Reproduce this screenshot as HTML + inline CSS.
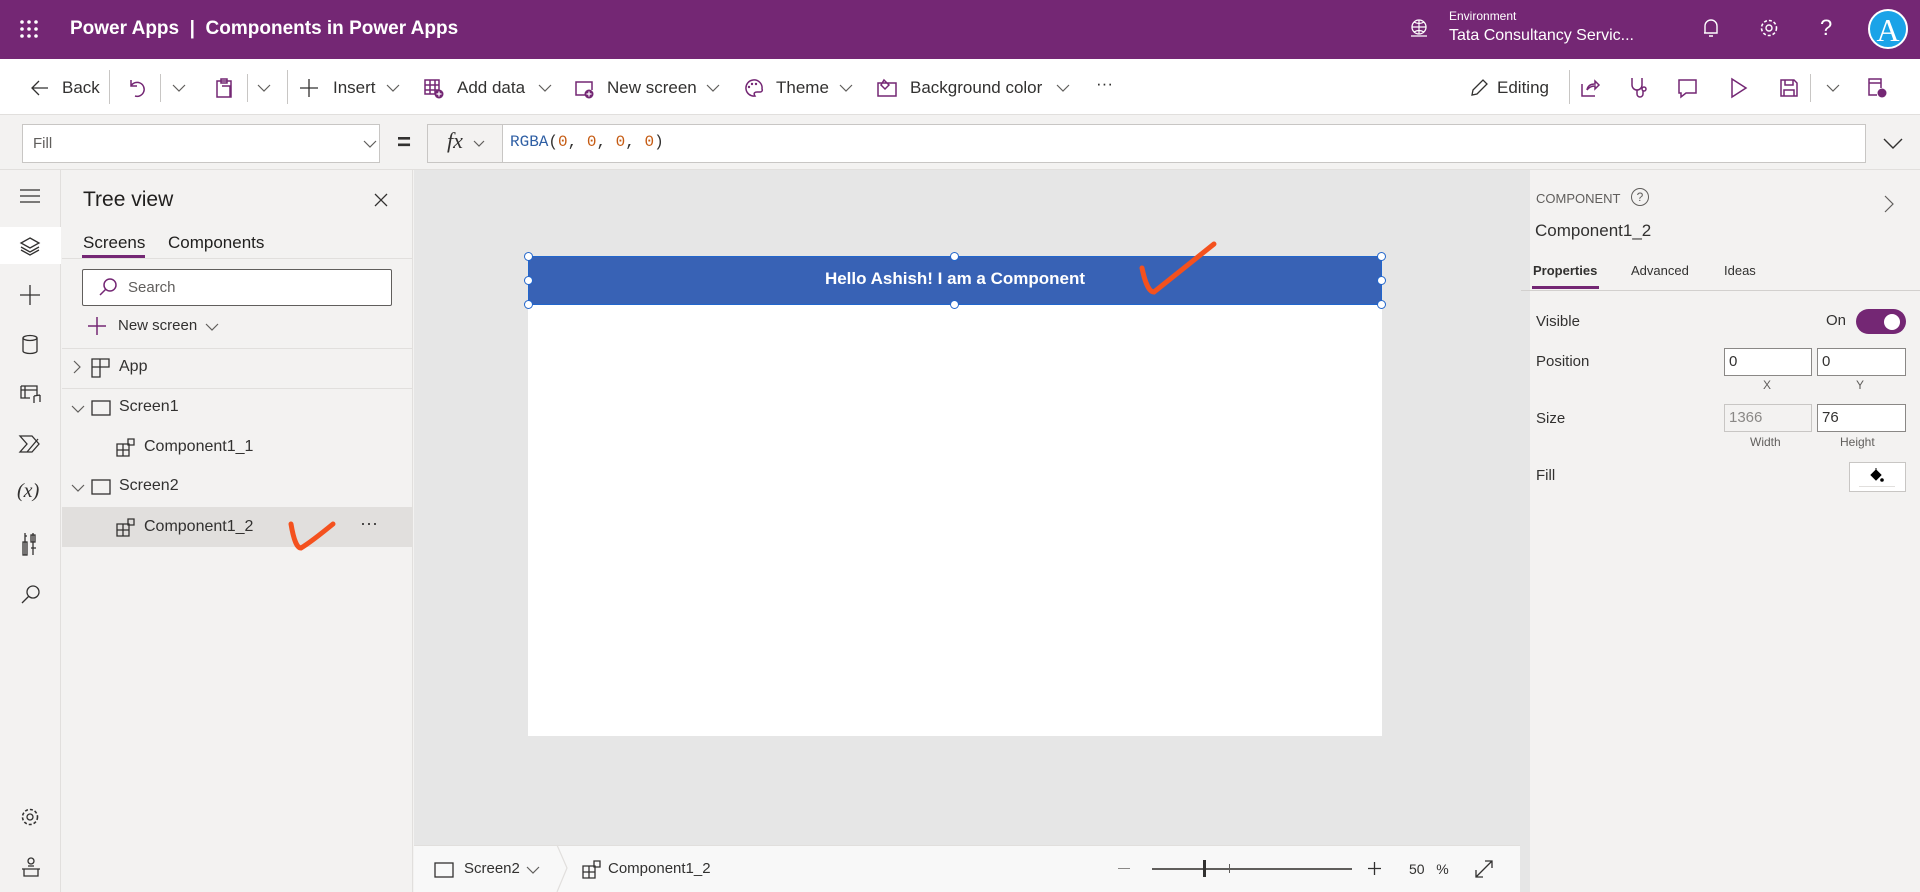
<!DOCTYPE html>
<html><head><meta charset="utf-8"><style>
*{margin:0;padding:0;box-sizing:border-box}
body{width:1920px;height:892px;position:relative;overflow:hidden;background:#f3f2f1;font-family:"Liberation Sans",sans-serif;color:#323130}
.a{position:absolute;white-space:nowrap}
svg{position:absolute;overflow:visible}
.t{font-size:17px;color:#323130}
.ch{fill:none;stroke:#605e5c;stroke-width:1.2}
.pi{fill:none;stroke:#742774;stroke-width:1.5}
.gi{fill:none;stroke:#323130;stroke-width:1.3}
.sep{position:absolute;width:1px;background:#c8c6c4}
.inp{position:absolute;background:#fff;border:1px solid #8a8886;font-size:15px;padding:4px 4px;color:#323130}
.h{position:absolute;width:9px;height:9px;border:1.5px solid #2266cc;border-radius:50%;background:#fff}
</style></head><body>
<!-- top bar -->
<div class="a" style="left:0;top:0;width:1920px;height:59px;background:#742774"></div>
<svg style="left:20px;top:20px" width="20" height="20"><g fill="#fff"><circle cx="2" cy="2" r="1.8"/><circle cx="9" cy="2" r="1.8"/><circle cx="16" cy="2" r="1.8"/><circle cx="2" cy="9" r="1.8"/><circle cx="9" cy="9" r="1.8"/><circle cx="16" cy="9" r="1.8"/><circle cx="2" cy="16" r="1.8"/><circle cx="9" cy="16" r="1.8"/><circle cx="16" cy="16" r="1.8"/></g></svg>
<div class="a" style="left:70px;top:18px;font-size:19px;font-weight:bold;color:#fff">Power Apps &nbsp;|&nbsp; Components in Power Apps</div>
<svg style="left:1410px;top:19px" width="20" height="20"><circle cx="9" cy="8" r="7" fill="none" stroke="#fff" stroke-width="1.3"/><path d="M2 8h14M9 1v14M4 3q5 3 10 0M4 13q5-3 10 0M1 17h16" fill="none" stroke="#fff" stroke-width="1.2"/></svg>
<div class="a" style="left:1449px;top:9px;font-size:12px;color:#fff">Environment</div>
<div class="a" style="left:1449px;top:27px;font-size:16px;color:#fff">Tata Consultancy Servic...</div>
<svg style="left:1702px;top:18px" width="20" height="22"><path d="M3 15V8a6 6 0 0 1 12 0v7H2M7 18h4" fill="none" stroke="#fff" stroke-width="1.4"/></svg>
<svg style="left:1759px;top:18px" width="22" height="22"><circle cx="10" cy="10" r="3" fill="none" stroke="#fff" stroke-width="1.4"/><circle cx="10" cy="10" r="7.5" fill="none" stroke="#fff" stroke-width="1.6" stroke-dasharray="3 2"/></svg>
<div class="a" style="left:1820px;top:15px;font-size:22px;color:#fff">?</div>
<div class="a" style="left:1868px;top:9px;width:40px;height:40px;border-radius:50%;background:#1aa3e8;border:2px solid #fff;color:#fff;font-family:'Liberation Serif',serif;font-size:32px;text-align:center;line-height:38px">A</div>
<!-- toolbar -->
<div class="a" style="left:0;top:59px;width:1920px;height:56px;background:#fff;border-bottom:1px solid #e1dfdd"></div>
<svg style="left:30px;top:80px" width="20" height="18"><path d="M18 8H2M9 1L2 8l7 7" class="gi"/></svg>
<div class="a t" style="left:62px;top:78px">Back</div>
<div class="sep" style="left:109px;top:70px;height:34px"></div>
<svg style="left:127px;top:78px" width="18" height="20"><path d="M4 2v6h6M4 8a7 7 0 1 1 4 10" class="pi"/></svg>
<svg style="left:172px;top:84px" width="14" height="8"><path d="M1 1l6 6 6-6" class="ch"/></svg>
<div class="sep" style="left:160px;top:74px;height:28px"></div>
<svg style="left:215px;top:77px" width="18" height="22"><path d="M2 4h14v16H2zM6 2h6v4H6zM7 9h8v11" class="pi"/></svg>
<div class="sep" style="left:247px;top:74px;height:28px"></div>
<svg style="left:257px;top:84px" width="14" height="8"><path d="M1 1l6 6 6-6" class="ch"/></svg>
<div class="sep" style="left:287px;top:70px;height:34px"></div>
<svg style="left:300px;top:79px" width="18" height="18"><path d="M9 0v18M0 9h18" class="gi"/></svg>
<div class="a t" style="left:333px;top:78px">Insert</div>
<svg style="left:386px;top:84px" width="14" height="8"><path d="M1 1l6 6 6-6" class="ch"/></svg>
<svg style="left:424px;top:79px" width="20" height="20"><path d="M1 1h14v14H1zM1 6h14M1 11h14M6 1v14M11 1v14" class="pi"/><circle cx="15" cy="15" r="4.5" fill="#742774"/><path d="M15 12.5v5M12.5 15h5" stroke="#fff" stroke-width="1.2"/></svg>
<div class="a t" style="left:457px;top:78px">Add data</div>
<svg style="left:538px;top:84px" width="14" height="8"><path d="M1 1l6 6 6-6" class="ch"/></svg>
<svg style="left:574px;top:80px" width="20" height="18"><path d="M12 15H2V2h16v8" class="pi"/><circle cx="15" cy="14" r="4.5" fill="#742774"/><path d="M15 11.5v5M12.5 14h5" stroke="#fff" stroke-width="1.2"/></svg>
<div class="a t" style="left:607px;top:78px">New screen</div>
<svg style="left:706px;top:84px" width="14" height="8"><path d="M1 1l6 6 6-6" class="ch"/></svg>
<svg style="left:744px;top:79px" width="19" height="19"><path d="M9 1a8 8 0 1 0 2 16c-2-3 0-4 2-4h3a2 2 0 0 0 2-3A8 8 0 0 0 9 1z" class="pi"/><circle cx="5" cy="8" r="1.2" fill="#742774"/><circle cx="8" cy="5" r="1.2" fill="#742774"/><circle cx="12" cy="5" r="1.2" fill="#742774"/></svg>
<div class="a t" style="left:776px;top:78px">Theme</div>
<svg style="left:839px;top:84px" width="14" height="8"><path d="M1 1l6 6 6-6" class="ch"/></svg>
<svg style="left:877px;top:78px" width="20" height="20"><path d="M1 5h18v13H1zM7 2l5 5-4 4-4-4z" class="pi"/></svg>
<div class="a t" style="left:910px;top:78px">Background color</div>
<svg style="left:1056px;top:84px" width="14" height="8"><path d="M1 1l6 6 6-6" class="ch"/></svg>
<div class="a t" style="left:1096px;top:74px">···</div>
<svg style="left:1470px;top:79px" width="18" height="18"><path d="M2 16l1-5L13 1l4 4L7 15z" class="gi"/></svg>
<div class="a t" style="left:1497px;top:78px">Editing</div>
<div class="sep" style="left:1569px;top:70px;height:34px"></div>
<svg style="left:1580px;top:78px" width="20" height="20"><path d="M2 6v12h13M7 12q1-6 8-6V3l4 4-4 4V8q-5 0-8 4" class="pi"/></svg>
<svg style="left:1629px;top:77px" width="20" height="22"><path d="M3 1v7a5 5 0 0 0 10 0V1M8 13v4a3 3 0 0 0 6 0v-3" class="pi"/><circle cx="15" cy="12" r="2" class="pi"/></svg>
<svg style="left:1677px;top:78px" width="22" height="22"><path d="M2 2h17v13H9l-5 4v-4H2z" class="pi"/></svg>
<svg style="left:1730px;top:78px" width="18" height="20"><path d="M2 1l14 9-14 9z" class="pi"/></svg>
<svg style="left:1779px;top:78px" width="20" height="20"><path d="M2 2h13l3 3v13H2zM6 2v5h8V2M5 18v-6h10v6" class="pi"/></svg>
<div class="sep" style="left:1810px;top:74px;height:28px"></div>
<svg style="left:1826px;top:84px" width="14" height="8"><path d="M1 1l6 6 6-6" class="ch"/></svg>
<svg style="left:1867px;top:77px" width="20" height="22"><path d="M10 18H2V2h12v9M2 6h12" class="pi"/><circle cx="15" cy="16" r="4.5" fill="#742774"/></svg>
<!-- formula bar -->
<div class="a" style="left:0;top:115px;width:1920px;height:55px;background:#f3f2f1;border-bottom:1px solid #e1dfdd"></div>
<div class="inp" style="left:22px;top:124px;width:358px;height:39px;padding:10px 10px;color:#605e5c;border-color:#c8c6c4">Fill</div>
<svg style="left:363px;top:140px" width="14" height="8"><path d="M1 1l6 6 6-6" class="ch"/></svg>
<div class="a" style="left:397px;top:129px;font-size:24px;font-weight:bold">=</div>
<div class="a" style="left:427px;top:124px;width:76px;height:39px;background:#f3f2f1;border:1px solid #c8c6c4"></div>
<div class="a" style="left:447px;top:128px;font-family:'Liberation Serif',serif;font-style:italic;font-size:22px">fx</div>
<svg style="left:473px;top:140px" width="12" height="7"><path d="M1 1l5 5 5-5" class="ch"/></svg>
<div class="a" style="left:502px;top:124px;width:1364px;height:39px;background:#fff;border:1px solid #c8c6c4"></div>
<div class="a" style="left:510px;top:133px;font-family:'Liberation Mono',monospace;font-size:16px;color:#323130"><span style="color:#2f5fa4">RGBA</span>(<span style="color:#c55a11">0</span>, <span style="color:#c55a11">0</span>, <span style="color:#c55a11">0</span>, <span style="color:#c55a11">0</span>)</div>
<svg style="left:1883px;top:138px" width="20" height="11"><path d="M1 1l9 9 9-9" fill="none" stroke="#323130" stroke-width="1.4"/></svg>
<!-- left rail -->
<div class="a" style="left:0;top:170px;width:61px;height:722px;background:#f3f2f1;border-right:1px solid #e1dfdd"></div>
<div class="a" style="left:0;top:227px;width:61px;height:37px;background:#fff"></div>
<svg style="left:20px;top:189px" width="20" height="14"><path d="M0 1h20M0 7h20M0 13h20" class="gi"/></svg>
<svg style="left:20px;top:236px" width="20" height="20"><path d="M10 2l9 5-9 5-9-5zM1 11l9 5 9-5M1 14l9 5 9-5" class="gi"/></svg>
<svg style="left:20px;top:285px" width="20" height="20"><path d="M10 0v20M0 10h20" class="gi"/></svg>
<svg style="left:22px;top:335px" width="16" height="20"><ellipse cx="8" cy="3" rx="7" ry="2.5" class="gi"/><path d="M1 3v13a7 2.5 0 0 0 14 0V3" class="gi"/></svg>
<svg style="left:20px;top:385px" width="22" height="20"><path d="M1 1h16v10M1 1v12h9M1 5h16M5 1v12M14 11v7M20 10v7M14 11l6-1" class="gi"/></svg>
<svg style="left:19px;top:435px" width="22" height="18"><path d="M1 1h12l7 8-7 8H1l7-8zM8 17l11-13" class="gi"/></svg>
<div class="a" style="left:17px;top:480px;font-family:'Liberation Serif',serif;font-style:italic;font-size:20px">(<i>x</i>)</div>
<svg style="left:22px;top:532px" width="16" height="24"><path d="M3 1v22M3 4h2M11 1v22M9 16h5" class="gi"/><rect x="1" y="10" width="4" height="13" class="gi"/><rect x="9" y="3" width="4" height="7" class="gi"/></svg>
<svg style="left:21px;top:584px" width="20" height="20"><circle cx="12" cy="8" r="6" class="gi"/><path d="M8 12L1 19" class="gi"/></svg>
<svg style="left:20px;top:807px" width="22" height="22"><circle cx="10" cy="10" r="3" class="gi"/><circle cx="10" cy="10" r="7.5" fill="none" stroke="#323130" stroke-width="1.6" stroke-dasharray="3 2"/></svg>
<svg style="left:21px;top:857px" width="20" height="20"><circle cx="10" cy="4" r="3" class="gi"/><path d="M1 12h18M3 12v7h14v-7M7 9h6" class="gi"/></svg>
<!-- tree panel -->
<div class="a" style="left:62px;top:170px;width:351px;height:722px;background:#f3f2f1;border-right:1px solid #e1dfdd"></div>
<div class="a" style="left:83px;top:188px;font-size:21px;color:#201f1e">Tree view</div>
<svg style="left:374px;top:193px" width="14" height="14"><path d="M1 1l12 12M13 1L1 13" class="gi"/></svg>
<div class="a" style="left:83px;top:233px;font-size:17px;color:#201f1e">Screens</div>
<div class="a" style="left:168px;top:233px;font-size:17px;color:#201f1e">Components</div>
<div class="a" style="left:82px;top:255px;width:63px;height:3px;background:#742774"></div>
<div class="a" style="left:62px;top:258px;width:351px;height:1px;background:#e1dfdd"></div>
<div class="a" style="left:82px;top:269px;width:310px;height:37px;background:#fff;border:1px solid #605e5c;border-radius:2px"></div>
<svg style="left:99px;top:278px" width="18" height="18"><circle cx="11" cy="7" r="6" class="pi"/><path d="M7 11L1 17" class="pi"/></svg>
<div class="a" style="left:128px;top:279px;font-size:15px;color:#605e5c">Search</div>
<svg style="left:88px;top:317px" width="18" height="18"><path d="M9 0v18M0 9h18" class="pi"/></svg>
<div class="a" style="left:118px;top:317px;font-size:15px">New screen</div>
<svg style="left:205px;top:323px" width="14" height="8"><path d="M1 1l6 6 6-6" class="ch"/></svg>
<div class="a" style="left:62px;top:348px;width:351px;height:1px;background:#e1dfdd"></div>
<svg style="left:73px;top:360px" width="8" height="14"><path d="M1 1l6 6-6 6" class="ch"/></svg>
<svg style="left:91px;top:358px" width="20" height="20"><path d="M1 1h17v8H9v10H1zM1 9h8M9 1v8" class="gi"/></svg>
<div class="a" style="left:119px;top:358px;font-size:16px">App</div>
<div class="a" style="left:62px;top:388px;width:351px;height:1px;background:#e1dfdd"></div>
<svg style="left:71px;top:405px" width="14" height="8"><path d="M1 1l6 6 6-6" class="ch"/></svg>
<svg style="left:91px;top:400px" width="20" height="16"><rect x="1" y="1" width="18" height="14" class="gi"/></svg>
<div class="a" style="left:119px;top:398px;font-size:16px">Screen1</div>
<svg style="left:116px;top:438px" width="20" height="20"><path d="M1 6h12v12H1zM1 12h12M7 6v12M12 1h6v6h-6z" class="gi"/></svg>
<div class="a" style="left:144px;top:438px;font-size:16px">Component1_1</div>
<svg style="left:71px;top:484px" width="14" height="8"><path d="M1 1l6 6 6-6" class="ch"/></svg>
<svg style="left:91px;top:479px" width="20" height="16"><rect x="1" y="1" width="18" height="14" class="gi"/></svg>
<div class="a" style="left:119px;top:477px;font-size:16px">Screen2</div>
<div class="a" style="left:62px;top:507px;width:350px;height:40px;background:#e1dfdd"></div>
<svg style="left:116px;top:518px" width="20" height="20"><path d="M1 6h12v12H1zM1 12h12M7 6v12M12 1h6v6h-6z" class="gi"/></svg>
<div class="a" style="left:144px;top:518px;font-size:16px">Component1_2</div>
<div class="a" style="left:360px;top:513px;font-size:18px">···</div>
<svg style="left:288px;top:518px" width="60" height="34"><path d="M3 6q4 24 10 24q10-6 32-24" fill="none" stroke="#f4511e" stroke-width="5" stroke-linecap="round"/></svg>
<!-- canvas -->
<div class="a" style="left:414px;top:170px;width:1106px;height:675px;background:#e6e6e6"></div>
<div class="a" style="left:528px;top:256px;width:854px;height:480px;background:#fff"></div>
<div class="a" style="left:528px;top:256px;width:854px;height:49px;background:#3862b5;border:1px solid #2266cc"></div>
<div class="a" style="left:528px;top:269px;width:854px;text-align:center;color:#fff;font-weight:bold;font-size:17px">Hello Ashish! I am a Component</div>
<div class="h" style="left:524px;top:252px"></div><div class="h" style="left:950px;top:252px"></div><div class="h" style="left:1377px;top:252px"></div>
<div class="h" style="left:524px;top:276px"></div><div class="h" style="left:1377px;top:276px"></div>
<div class="h" style="left:524px;top:300px"></div><div class="h" style="left:950px;top:300px"></div><div class="h" style="left:1377px;top:300px"></div>
<svg style="left:1138px;top:240px" width="84" height="64"><path d="M4 28q5 24 12 24q15-12 60-48" fill="none" stroke="#f4511e" stroke-width="5" stroke-linecap="round"/></svg>
<!-- bottom bar -->
<div class="a" style="left:414px;top:845px;width:1106px;height:47px;background:#f8f8f8;border-top:1px solid #e1dfdd"></div>
<svg style="left:434px;top:862px" width="20" height="16"><rect x="1" y="1" width="18" height="14" class="gi"/></svg>
<div class="a" style="left:464px;top:860px;font-size:15px">Screen2</div>
<svg style="left:526px;top:866px" width="14" height="8"><path d="M1 1l6 6 6-6" class="ch"/></svg>
<svg style="left:556px;top:845px" width="14" height="47"><path d="M1 0l10 23-10 24" fill="none" stroke="#e1dfdd" stroke-width="1.2"/></svg>
<svg style="left:582px;top:860px" width="20" height="20"><path d="M1 6h12v12H1zM1 12h12M7 6v12M12 1h6v6h-6z" class="gi"/></svg>
<div class="a" style="left:608px;top:860px;font-size:15px">Component1_2</div>
<div class="a" style="left:1118px;top:868px;width:12px;height:1px;background:#8a8886"></div>
<div class="a" style="left:1152px;top:868px;width:200px;height:2px;background:#605e5c"></div>
<div class="a" style="left:1203px;top:860px;width:3px;height:17px;background:#323130"></div>
<div class="a" style="left:1229px;top:864px;width:1px;height:9px;background:#605e5c"></div>
<svg style="left:1368px;top:862px" width="13" height="13"><path d="M6.5 0v13M0 6.5h13" class="gi"/></svg>
<div class="a" style="left:1409px;top:861px;font-size:14px">50 &nbsp;&nbsp;%</div>
<svg style="left:1475px;top:860px" width="18" height="18"><path d="M1 17L17 1M10 1h7v7M1 10v7h7" class="gi"/></svg>
<!-- right panel -->
<div class="a" style="left:1520px;top:170px;width:400px;height:722px;background:#f3f2f1;border-left:1px solid #e1dfdd"></div>
<div class="a" style="left:1520px;top:170px;width:10px;height:722px;background:#e6e6e6"></div>
<div class="a" style="left:1536px;top:191px;font-size:13px;color:#605e5c">COMPONENT</div>
<div class="a" style="left:1631px;top:188px;width:18px;height:18px;border:1.3px solid #605e5c;border-radius:50%;font-size:12px;text-align:center;line-height:16px;color:#605e5c">?</div>
<svg style="left:1884px;top:195px" width="10" height="18"><path d="M1 1l8 8-8 8" class="ch"/></svg>
<div class="a" style="left:1535px;top:221px;font-size:17px;color:#323130">Component1_2</div>
<div class="a" style="left:1533px;top:263px;font-size:13px;font-weight:bold;color:#323130">Properties</div>
<div class="a" style="left:1631px;top:263px;font-size:13px;color:#323130">Advanced</div>
<div class="a" style="left:1724px;top:263px;font-size:13px;color:#323130">Ideas</div>
<div class="a" style="left:1532px;top:286px;width:67px;height:3px;background:#742774"></div>
<div class="a" style="left:1521px;top:290px;width:399px;height:1px;background:#d2d0ce"></div>
<div class="a" style="left:1536px;top:313px;font-size:15px">Visible</div>
<div class="a" style="left:1826px;top:312px;font-size:15px">On</div>
<div class="a" style="left:1856px;top:309px;width:50px;height:25px;border-radius:13px;background:#742774"></div>
<div class="a" style="left:1884px;top:314px;width:16px;height:16px;border-radius:50%;background:#fff"></div>
<div class="a" style="left:1536px;top:353px;font-size:15px">Position</div>
<div class="inp" style="left:1724px;top:348px;width:88px;height:28px">0</div>
<div class="inp" style="left:1817px;top:348px;width:89px;height:28px">0</div>
<div class="a" style="left:1763px;top:378px;font-size:12px;color:#605e5c">X</div>
<div class="a" style="left:1856px;top:378px;font-size:12px;color:#605e5c">Y</div>
<div class="a" style="left:1536px;top:410px;font-size:15px">Size</div>
<div class="inp" style="left:1724px;top:404px;width:88px;height:28px;background:#f3f2f1;color:#8a8886;border-color:#c8c6c4">1366</div>
<div class="inp" style="left:1817px;top:404px;width:89px;height:28px">76</div>
<div class="a" style="left:1750px;top:435px;font-size:12px;color:#605e5c">Width</div>
<div class="a" style="left:1840px;top:435px;font-size:12px;color:#605e5c">Height</div>
<div class="a" style="left:1536px;top:467px;font-size:15px">Fill</div>
<div class="a" style="left:1849px;top:462px;width:57px;height:30px;background:#fff;border:1px solid #c8c6c4"></div>
<svg style="left:1869px;top:468px" width="16" height="16"><path d="M2 7l5-5 5 5-5 5zM7 2V0" fill="#000" stroke="#000" stroke-width="1"/><circle cx="13" cy="12" r="1.8" fill="#000"/></svg>
<div class="a" style="left:1859px;top:486px;width:36px;height:1px;background:#e1dfdd"></div>
</body></html>
